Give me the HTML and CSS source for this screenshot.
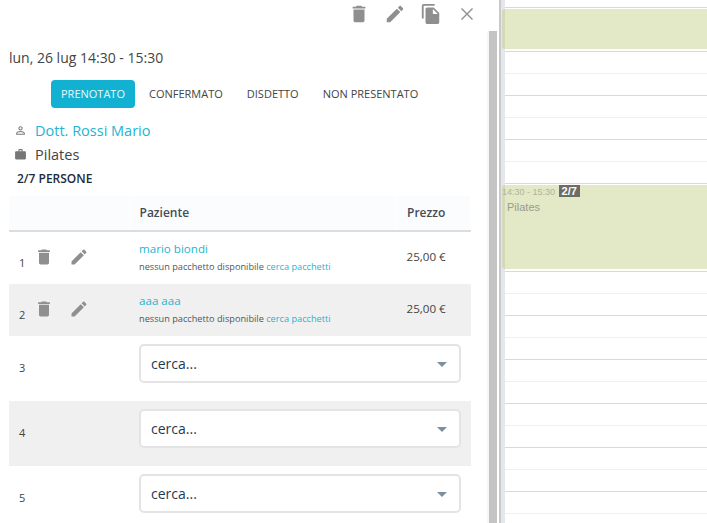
FILE: index.html
```html
<!DOCTYPE html>
<html lang="en">
<head>
    <meta charset="UTF-8">
    <meta name="viewport" content="width=device-width, initial-scale=1.0">
    <title>Appuntamento</title>
    <link rel="stylesheet" href="styles.css">
</head>
<body>
    <div class="page">
        <div class="panel">
            <div class="toolbar">
                <svg class="icon" viewBox="0 0 24 24"><path d="M6 19c0 1.1.9 2 2 2h8c1.1 0 2-.9 2-2V7H6v12zM19 4h-3.5l-1-1h-5l-1 1H5v2h14V4z"/></svg>
                <svg class="icon" viewBox="0 0 24 24"><path d="M3 17.25V21h3.75L17.81 9.94l-3.75-3.75L3 17.25zM20.71 7.04c.39-.39.39-1.02 0-1.41l-2.34-2.34c-.39-.39-1.02-.39-1.41 0l-1.83 1.83 3.75 3.75 1.83-1.83z"/></svg>
                <svg class="icon" viewBox="1 0 22 24"><path d="M16 1H4c-1.1 0-2 .9-2 2v14h2V3h12V1zm-1 4l6 6v10c0 1.1-.9 2-2 2H7.99C6.89 23 6 22.1 6 21l.01-14c0-1.1.89-2 1.99-2h7zm-1 7h5.5L14 6.5V12z"/></svg>
                <svg class="icon" viewBox="0 0 22 22"><path class="thin" d="M5.5 5.5l11 11M16.5 5.5l-11 11"/></svg>
            </div>
            <div class="date">lun, 26 lug 14:30 - 15:30</div>
            <div class="status">
                <span class="status-btn active">PRENOTATO</span>
                <span class="status-btn">CONFERMATO</span>
                <span class="status-btn">DISDETTO</span>
                <span class="status-btn">NON PRESENTATO</span>
            </div>
            <div class="info">
                <svg class="info-icon" viewBox="0 0 24 24"><path d="M12 5.9c1.16 0 2.1.94 2.1 2.1s-.94 2.1-2.1 2.1S9.9 9.16 9.9 8s.94-2.1 2.1-2.1m0 9c2.97 0 6.1 1.46 6.1 2.1v1.1H5.9V17c0-.64 3.13-2.1 6.1-2.1M12 4C9.79 4 8 5.79 8 8s1.79 4 4 4 4-1.79 4-4-1.79-4-4-4zm0 9c-2.67 0-8 1.34-8 4v3h16v-3c0-2.66-5.33-4-8-4z"/></svg>
                <span class="link">Dott. Rossi Mario</span>
            </div>
            <div class="info">
                <svg class="info-icon" viewBox="0 0 24 24"><path d="M20 6h-4V4c0-1.11-.89-2-2-2h-4c-1.11 0-2 .89-2 2v2H4c-1.11 0-2 .89-2 2v11c0 1.11.89 2 2 2h16c1.11 0 2-.89 2-2V8c0-1.11-.89-2-2-2zm-6 0h-4V4h4v2z"/></svg>
                <span>Pilates</span>
            </div>
            <div class="count">2/7 PERSONE</div>
            <table class="patients">
                <thead>
                    <tr>
                        <th class="col-actions"></th>
                        <th class="col-name">Paziente</th>
                        <th class="col-price">Prezzo</th>
                    </tr>
                </thead>
                <tbody>
                    <tr class="booked">
                        <td>
                            <div class="actions">
                                <span class="num">1</span>
                                <svg class="icon" viewBox="0 0 24 24"><path d="M6 19c0 1.1.9 2 2 2h8c1.1 0 2-.9 2-2V7H6v12zM19 4h-3.5l-1-1h-5l-1 1H5v2h14V4z"/></svg>
                                <svg class="icon" viewBox="0 0 24 24"><path d="M3 17.25V21h3.75L17.81 9.94l-3.75-3.75L3 17.25zM20.71 7.04c.39-.39.39-1.02 0-1.41l-2.34-2.34c-.39-.39-1.02-.39-1.41 0l-1.83 1.83 3.75 3.75 1.83-1.83z"/></svg>
                            </div>
                        </td>
                        <td class="name-cell">
                            <div class="name link">mario biondi</div>
                            <div class="note">nessun pacchetto disponibile <span class="link">cerca pacchetti</span></div>
                        </td>
                        <td class="price">25,00 €</td>
                    </tr>
                    <tr class="booked grey">
                        <td>
                            <div class="actions">
                                <span class="num">2</span>
                                <svg class="icon" viewBox="0 0 24 24"><path d="M6 19c0 1.1.9 2 2 2h8c1.1 0 2-.9 2-2V7H6v12zM19 4h-3.5l-1-1h-5l-1 1H5v2h14V4z"/></svg>
                                <svg class="icon" viewBox="0 0 24 24"><path d="M3 17.25V21h3.75L17.81 9.94l-3.75-3.75L3 17.25zM20.71 7.04c.39-.39.39-1.02 0-1.41l-2.34-2.34c-.39-.39-1.02-.39-1.41 0l-1.83 1.83 3.75 3.75 1.83-1.83z"/></svg>
                            </div>
                        </td>
                        <td class="name-cell">
                            <div class="name link">aaa aaa</div>
                            <div class="note">nessun pacchetto disponibile <span class="link">cerca pacchetti</span></div>
                        </td>
                        <td class="price">25,00 €</td>
                    </tr>
                    <tr class="free">
                        <td class="num-cell">3</td>
                        <td colspan="2"><div class="search">cerca...<span class="arrow"></span></div></td>
                    </tr>
                    <tr class="free grey">
                        <td class="num-cell">4</td>
                        <td colspan="2"><div class="search">cerca...<span class="arrow"></span></div></td>
                    </tr>
                    <tr class="free">
                        <td class="num-cell">5</td>
                        <td colspan="2"><div class="search">cerca...<span class="arrow"></span></div></td>
                    </tr>
                </tbody>
            </table>
        </div>
        <div class="scrollbar"><div class="thumb"></div></div>
        <div class="calendar">
            <div class="event event-first"></div>
            <div class="event event-second">
                <div class="event-time">14:30 - 15:30 <span class="event-badge">2/7</span></div>
                <div class="event-title">Pilates</div>
            </div>
        </div>
    </div>
</body>
</html>
```

FILE: styles.css
```css
html, body {
    margin: 0;
    height: 100%;
    overflow: hidden;
}
body {
    font-family: "Open Sans", sans-serif;
    font-size: 14px;
    color: #444;
    background: #fff;
}
.page {
    display: flex;
    height: 523px;
    overflow: hidden;
}
.panel {
    width: 487px;
    flex-shrink: 0;
    box-sizing: border-box;
    padding-left: 9px;
}
.toolbar {
    display: flex;
    justify-content: flex-end;
    align-items: center;
    gap: 14px;
    height: 28px;
    padding-right: 9px;
}
.icon {
    width: 22px;
    height: 22px;
    fill: #8f8f8f;
    flex-shrink: 0;
}
.thin {
    fill: none;
    stroke: #8f8f8f;
    stroke-width: 1.4;
}
.date {
    margin-top: 20px;
    line-height: 20px;
}
.status {
    display: flex;
    margin-top: 12px;
    padding-left: 42px;
    gap: 4px;
}
.status-btn {
    padding: 0 10px;
    font-size: 11px;
    line-height: 28px;
    border-radius: 4px;
    color: #444;
}
.status-btn.active {
    background: #12b1d1;
    color: #e8f8fb;
}
.info {
    display: flex;
    align-items: center;
    height: 24px;
    padding-left: 5px;
    font-size: 14.5px;
}
.status + .info {
    margin-top: 10px;
}
.info-icon {
    width: 13px;
    height: 13px;
    margin-right: 8px;
    fill: #777;
}
.link {
    color: #24b4d2;
}
.count {
    margin-top: 4px;
    padding-left: 8px;
    font-size: 12px;
    font-weight: 600;
    line-height: 18px;
    color: #1d2b3a;
}
.patients {
    width: 462px;
    margin-top: 8px;
    border-collapse: collapse;
    table-layout: fixed;
}
.patients th {
    box-sizing: border-box;
    height: 35px;
    padding: 0 10px 2px;
    text-align: left;
    font-size: 12px;
    font-weight: 600;
    color: #444c55;
    background: #fbfcfe;
    border-bottom: 2px solid #ddd;
    border-right: 1px solid #fff;
}
.patients .col-actions {
    width: 120px;
}
.patients .col-price {
    width: 75px;
    padding-left: 11px;
}
.patients td {
    box-sizing: border-box;
    padding: 0 10px;
    vertical-align: middle;
}
.grey td {
    background: #f0f0f0;
}
.booked td {
    height: 52px;
}
.booked:first-child td {
    height: 53px;
}
.free td {
    height: 65px;
}
.actions {
    display: flex;
    align-items: center;
    gap: 15px;
    margin-bottom: 3px;
}
.actions .icon {
    width: 20px;
    height: 20px;
}
.num {
    width: 9px;
    font-size: 11px;
    margin-top: 12px;
}
.actions .num {
    margin-right: -9px;
}
.patients .num-cell {
    font-size: 11px;
    padding-bottom: 2px;
}
.patients .name-cell {
    padding-bottom: 2px;
}
.name {
    font-size: 11.6px;
    line-height: 16px;
}
.note {
    font-size: 9.2px;
    line-height: 13px;
    margin-top: 3px;
    color: #555;
}
.patients .price {
    font-size: 11.6px;
    padding-left: 11px;
    padding-right: 0;
    padding-bottom: 4px;
}
.search {
    position: relative;
    box-sizing: border-box;
    width: 322px;
    height: 39px;
    margin-bottom: 10px;
    padding: 0 10px;
    border: 2px solid #e4e4e4;
    border-radius: 5px;
    background: #fff;
    font-size: 14px;
    line-height: 36px;
    color: #1f3a52;
}
.arrow {
    position: absolute;
    right: 12px;
    top: 16px;
    border-left: 5px solid transparent;
    border-right: 5px solid transparent;
    border-top: 5px solid #7d8e9c;
}
.scrollbar {
    width: 10px;
    flex-shrink: 0;
    margin-top: 31px;
    background: #f6f6f6;
}
.thumb {
    width: 8px;
    height: 100%;
    margin-left: 2px;
    background: #c4c4c4;
}
.calendar {
    position: relative;
    flex: 1;
    margin-left: 2px;
    border-left: 2px solid #c9c9cd;
    background:
        linear-gradient(#e4e7ec, #e4e7ec) left top / 4px 100% no-repeat,
        repeating-linear-gradient(
            #fff 0, #fff 7px,
            #d9d9dd 7px, #d9d9dd 8px,
            #fff 8px, #fff 29px,
            #efefef 29px, #efefef 30px,
            #fff 30px, #fff 44px
        );
}
.event {
    position: absolute;
    left: 1px;
    right: 0;
    box-sizing: border-box;
    background: #e3e8c6;
    border-left: 3px solid #d4d9b8;
    border-radius: 3px 0 0 3px;
}
.event-first {
    top: 9px;
    height: 40px;
}
.event-second {
    top: 185px;
    height: 84px;
}
.event-time {
    font-family: "Liberation Sans", sans-serif;
    font-size: 9px;
    line-height: 13px;
    margin-left: -3px;
    color: #b0b3a0;
}
.event-badge {
    display: inline-block;
    padding: 0 3px;
    margin-left: 1px;
    font-size: 11px;
    font-weight: bold;
    line-height: 12px;
    color: #fff;
    background: #6d6d66;
}
.event-title {
    font-family: "Liberation Sans", sans-serif;
    font-size: 11px;
    line-height: 13px;
    margin: 2px 0 0 2px;
    color: #9a9c8c;
}
```
